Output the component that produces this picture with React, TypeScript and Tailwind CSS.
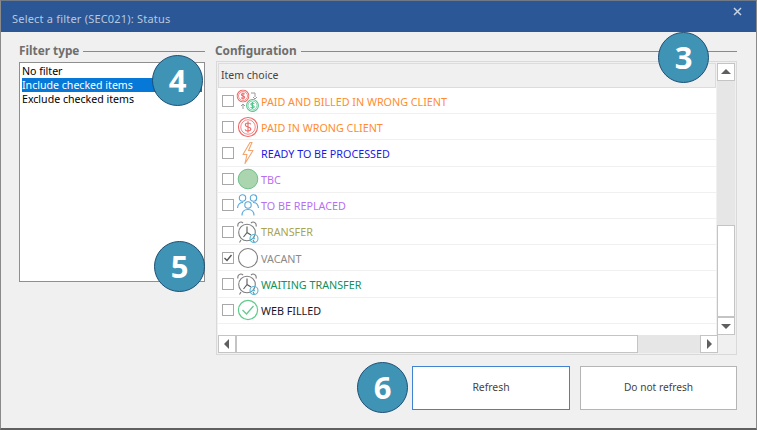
import React from 'react';

const font = { fontFamily: '"Noto Sans", "Liberation Sans", sans-serif' };

const IconDollar = ({ size = 22, color = '#ee6a6a', cx = 11, cy = 11, sw = 1.2 }: { size?: number; color?: string; cx?: number; cy?: number; sw?: number }) => (
  <svg x={cx - size / 2} y={cy - size / 2} width={size} height={size} viewBox="0 0 22 22" fill="none" stroke={color} strokeWidth={sw}>
    <circle cx="11" cy="11" r="10" />
    <circle cx="11" cy="11" r="7.6" strokeWidth={sw * 0.7} />
    <path d="M14 8.2C13.4 7 12.2 6.8 11 6.8 9.4 6.8 8.2 7.6 8.2 8.9 8.2 11.6 14 10.4 14 13.2 14 14.5 12.6 15.2 11 15.2 9.6 15.2 8.5 14.8 8 13.6M11 5V17" />
  </svg>
);

const icons: Record<string, React.ReactNode> = {
  swap: (
    <svg width="24" height="24" viewBox="0 0 24 24" fill="none">
      <IconDollar size={13} cx={7} cy={7} color="#ee6a6a" sw={1.8} />
      <IconDollar size={13} cx={16.5} cy={16.5} color="#52c48a" sw={1.8} />
      <path d="M15 4H19V8M17 8L19 10 21 8" stroke="#9a9a9a" strokeWidth="1" />
      <path d="M7 20V15M5 17L7 15 9 17" stroke="#9a9a9a" strokeWidth="1" />
    </svg>
  ),
  dollar: (
    <svg width="24" height="24" viewBox="0 0 24 24" fill="none">
      <IconDollar size={21} cx={12} cy={12} />
    </svg>
  ),
  bolt: (
    <svg width="24" height="24" viewBox="0 0 24 24" fill="none">
      <path d="M14 1.5L7 13.5H11L9 22.5L17 9.5H12.5L16 1.5Z" stroke="#f2a56f" strokeWidth="1.1" strokeLinejoin="round" />
    </svg>
  ),
  disc: (
    <svg width="24" height="24" viewBox="0 0 24 24">
      <circle cx="12" cy="12" r="9.8" fill="#abd5ae" stroke="#6fc08c" strokeWidth="1" />
    </svg>
  ),
  people: (
    <svg width="24" height="24" viewBox="0 0 24 24" fill="none" stroke="#5ba7d8" strokeWidth="1.1">
      <circle cx="6.5" cy="5" r="3.2" />
      <circle cx="17.5" cy="5" r="3.2" />
      <circle cx="12" cy="12" r="3.2" />
      <path d="M1.5 15C2 11 4 9.5 7 9.5M22.5 15C22 11 20 9.5 17 9.5M6 22.5C6 18.5 8.5 16.5 12 16.5S18 18.5 18 22.5" />
    </svg>
  ),
  clock: (
    <svg width="24" height="24" viewBox="0 0 24 24" fill="none" stroke="#7d7d7d" strokeWidth="1.1">
      <circle cx="11" cy="12.5" r="8.3" />
      <path d="M2 6.5C1 3.5 4.5 0.5 7 3M20 6.5C21 3.5 17.5 0.5 15 3M5 20L3.5 22.5M17 20L18.5 22.5" />
      <path d="M11 6.5V12.5L7.5 17M11 12.5L15 15" stroke="#5a5a5a" />
      <circle cx="18" cy="18.5" r="4" stroke="#57b6d6" />
      <path d="M16 18.5H19M18 17V19.5" stroke="#57b6d6" strokeWidth="0.9" />
    </svg>
  ),
  ring: (
    <svg width="24" height="24" viewBox="0 0 24 24" fill="none">
      <circle cx="12" cy="12" r="9.5" stroke="#7f7f7f" strokeWidth="1.1" />
    </svg>
  ),
  check: (
    <svg width="24" height="24" viewBox="0 0 24 24" fill="none" stroke="#5fcb8c" strokeWidth="1.2">
      <circle cx="12" cy="12" r="9.6" />
      <path d="M6.5 12L10.5 16 17.5 8" />
    </svg>
  ),
};

const rows = [
  { icon: 'swap', label: 'PAID AND BILLED IN WRONG CLIENT', color: 'text-[#ff8c2e]' },
  { icon: 'dollar', label: 'PAID IN WRONG CLIENT', color: 'text-[#ff8c2e]' },
  { icon: 'bolt', label: 'READY TO BE PROCESSED', color: 'text-[#1a1ae6]' },
  { icon: 'disc', label: 'TBC', color: 'text-[#b66ff2]' },
  { icon: 'people', label: 'TO BE REPLACED', color: 'text-[#b66ff2]' },
  { icon: 'clock', label: 'TRANSFER', color: 'text-[#a9a450]' },
  { icon: 'ring', label: 'VACANT', color: 'text-[#8a8a8a]', checked: true },
  { icon: 'clock', label: 'WAITING TRANSFER', color: 'text-[#0f9160]' },
  { icon: 'check', label: 'WEB FILLED', color: 'text-[#16162e]' },
];

const Legend = ({ title, className = '' }: { title: string; className?: string }) => (
  <div className={`flex items-center gap-1 h-[16px] ${className}`}>
    <span className="text-[11.8px] font-bold text-[#6e6e6e] whitespace-nowrap">{title}</span>
    <div className="flex-1 h-px bg-[#8a8a8a]" />
  </div>
);

const Badge = ({ n, className }: { n: number; className: string }) => (
  <div
    className={`absolute w-[51px] h-[51px] rounded-full bg-[#3f94b6] border-[1.5px] border-[#1d4e74] flex items-center justify-center text-white text-[31px] font-bold ${className}`}
    style={{ fontFamily: '"Open Sans", sans-serif' }}
  >
    {n}
  </div>
);

const Arrow = ({ dir }: { dir: 'up' | 'down' | 'left' | 'right' }) => {
  const points = { up: '0,7 5,2 10,7', down: '0,3 10,3 5,8', left: '7,0 7,10 2,5', right: '3,0 3,10 8,5' }[dir];
  return (
    <svg width="10" height="10" viewBox="0 0 10 10">
      <polygon points={points} fill="#5f5f5f" />
    </svg>
  );
};

const ScrollButton = ({ dir }: { dir: 'up' | 'down' | 'left' | 'right' }) => (
  <div className="w-[18px] h-[18px] shrink-0 bg-white border border-[#c4c4c4] flex items-center justify-center">
    <Arrow dir={dir} />
  </div>
);

export default function App() {
  return (
    <div className="relative w-[757px] h-[430px] overflow-hidden flex flex-col bg-[#f0f0f0] border border-t-[#6f7a86] border-x-[#8a8a8a] border-b-2 border-b-[#606060]" style={font}>
      {/* Title bar */}
      <div className="h-[31px] shrink-0 bg-[#2b5797] flex items-start justify-between pl-[11px] pr-[14px]">
        <span className="pt-[9px] text-[11px] leading-[18px] tracking-[0.2px] text-[#b9c8de]">Select a filter (SEC021): Status</span>
        <span className="pt-[6px] text-[#c6d2e4]">
          <svg width="9" height="9" viewBox="0 0 9 9" stroke="currentColor" strokeWidth="1.5"><path d="M1 1L8 8M8 1L1 8" /></svg>
        </span>
      </div>

      <div className="flex gap-[11px] pl-[18px] pr-[19px] pt-[11px]">
        {/* Filter type */}
        <div className="w-[186px] shrink-0 flex flex-col">
          <Legend title="Filter type" />
          <div className="mt-[3px] h-[220px] bg-white border border-[#8f8f8f] p-[2px] pt-[1px] text-[10.6px] leading-[14px] text-black">
            <div>No filter</div>
            <div className="bg-[#0678d7] text-white">Include checked items</div>
            <div>Exclude checked items</div>
          </div>
        </div>

        {/* Configuration */}
        <div className="flex-1 flex flex-col">
          <Legend title="Configuration" className="-ml-px" />
          <div className="mt-[2px] h-[294px] border border-[#d9d9d9] bg-[#f0f0f0] p-px flex flex-col">
            <div className="flex-1 flex min-h-0">
              <div className="flex-1 flex flex-col bg-white">
                <div className="h-[25px] shrink-0 bg-[#f0f0f0] border border-[#dcdcdc] flex items-center pl-[2px] text-[10.5px] text-[#444]">Item choice</div>
                {rows.map((row) => (
                  <div key={row.label} className="h-[26.2px] shrink-0 flex items-center border-b border-[#f0f0f0] pl-[4px]">
                    <span className="w-[12px] h-[12px] border border-[#a8a8a8] bg-white flex items-center justify-center shrink-0">
                      {row.checked && (
                        <svg width="10" height="10" viewBox="0 0 10 10" fill="none" stroke="#555" strokeWidth="1.4"><path d="M1.5 5L4 7.5 8.5 2" /></svg>
                      )}
                    </span>
                    <span className="ml-[2px] w-[24px] h-[24px] shrink-0">{icons[row.icon]}</span>
                    <span className={`ml-px pt-[2px] text-[10.75px] whitespace-nowrap ${row.color}`}>{row.label}</span>
                  </div>
                ))}
              </div>
              {/* Vertical scrollbar */}
              <div className="w-[18px] shrink-0 ml-px flex flex-col bg-[#e6e6e6]">
                <ScrollButton dir="up" />
                <div className="h-[144px]" />
                <div className="h-[92px] bg-white border border-[#c4c4c4]" />
                <ScrollButton dir="down" />
              </div>
            </div>
            {/* Horizontal scrollbar */}
            <div className="h-[18px] shrink-0 flex">
              <ScrollButton dir="left" />
              <div className="w-[402px] bg-white border border-[#c4c4c4]" />
              <div className="w-[62px] bg-[#e6e6e6]" />
              <ScrollButton dir="right" />
            </div>
          </div>
        </div>
      </div>

      {/* Buttons */}
      <div className="flex justify-end gap-[10px] pr-[19px] mt-[11px]">
        <button className="w-[158px] h-[44px] bg-white border-[1.5px] border-[#3f83d2] text-[10.4px] text-[#444]">Refresh</button>
        <button className="w-[157px] h-[44px] bg-white border border-[#b5b5b5] text-[10.2px] text-[#444]">Do not refresh</button>
      </div>

      <Badge n={4} className="left-[151px] top-[54px]" />
      <Badge n={3} className="left-[657px] top-[31px]" />
      <Badge n={5} className="left-[153px] top-[240px]" />
      <Badge n={6} className="left-[356px] top-[361px]" />
    </div>
  );
}
